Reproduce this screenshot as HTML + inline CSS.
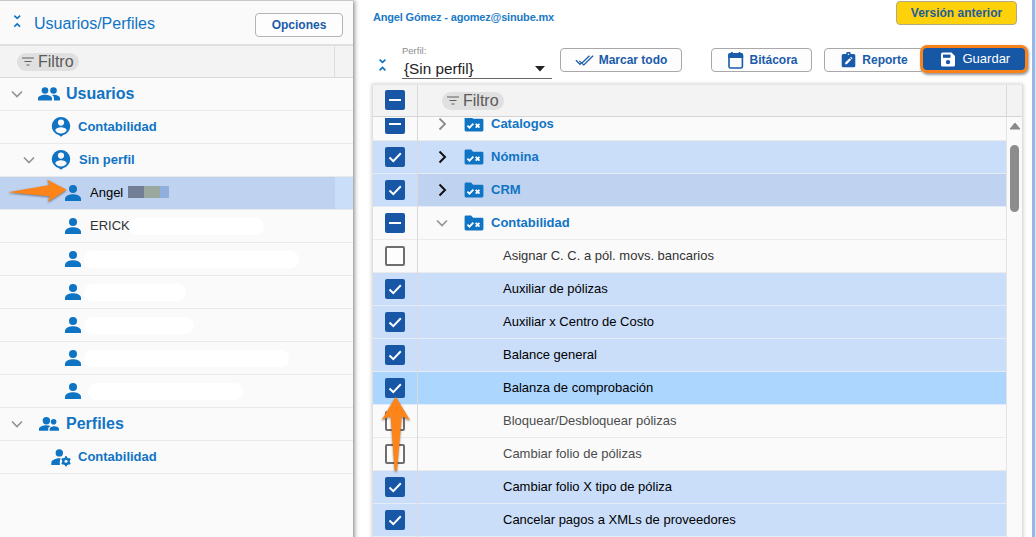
<!DOCTYPE html><html lang="es"><head>
<meta charset="utf-8">
<title>Usuarios/Perfiles</title>
<style>
*{box-sizing:border-box;margin:0;padding:0}
html,body{width:1036px;height:537px;overflow:hidden;background:#fff;font-family:"Liberation Sans",Arial,sans-serif;}
body{position:relative}
.abs{position:absolute}
#left{position:absolute;left:0;top:0;width:353px;height:545px;background:#fafafa;box-shadow:1px 0 5px rgba(0,0,0,.55);z-index:2}
#left .hdr{position:absolute;left:0;top:0;width:353px;height:46px;border-top:1px solid #c8c8c8;border-bottom:2px solid #e0e0e0}
#left .title{position:absolute;left:34px;top:14px;font-size:16px;color:#1074c4;line-height:18px;white-space:nowrap}
.btn{position:absolute;border:1px solid #a8a8a8;border-radius:4px;background:#fdfdfd;color:#1a5baa;font-weight:bold;font-size:12px;line-height:22px;text-align:center;white-space:nowrap}
.frow{position:absolute;left:0;top:46px;width:353px;height:32px;background:#f3f3f3;border-bottom:1px solid #dadada}
.chip{position:absolute;height:18px;width:62px;border-radius:9px;background:#e0e0e0;color:#5a5a5a;font-size:16px;line-height:18px;padding-left:21px;white-space:nowrap}
.chip svg{position:absolute;left:5px;top:4px}
.lrow{position:absolute;left:0;width:353px;height:33px;border-bottom:1px solid #e9e9e9}
.lrow.sel{background:#bfd3f1}
.lrow .t{position:absolute;top:8px;line-height:16px;white-space:nowrap}
.t.h1{font-size:16px;font-weight:bold;color:#1074c4}
.t.h2{font-size:13px;font-weight:bold;color:#1074c4}
.t.u{font-size:13px;color:#333}
.sel .t.u{color:#000}
.lrow svg{position:absolute}
.pill{position:absolute;background:#fff;border-radius:9px;height:17px}
#right{position:absolute;left:354px;top:0;width:682px;height:537px;background:#fff}
.grid{position:absolute;left:372px;top:84px;width:651px;border-right:1px solid #dedede;height:460px;background:#fafafa;border-left:1px solid #e0e0e0;border-top:1px solid #e6e6e6;box-shadow:0 0 4px rgba(0,0,0,.22)}
.ghead{position:absolute;left:0;top:0;width:649px;height:32px;background:#f3f3f3;border-bottom:1px solid #d4d4d4}
.grow{position:absolute;left:0;width:634px;height:33px;border-bottom:1px solid #ebebeb}
.grow.c1{background:#cadefa;border-bottom-color:#e4ecf8}
.grow.c2{background:#bfd3f1;border-bottom-color:#e4ecf8}
.grow.c3{background:#add6ff;border-bottom-color:#e4ecf8}
.grow .cb{position:absolute;left:12px;top:6px}
.grow .t{position:absolute;top:8px;font-size:13px;line-height:15px;white-space:nowrap;color:#222}
.grow .t.b,.grow.c1 .t.b,.grow.c2 .t.b{font-weight:bold;color:#1074c4;top:7.500px}
.grow .t.g{color:#4c4c4c}
.grow.c1 .t,.grow.c3 .t{color:#000}
.grow .t{color:#333}
.vsep{position:absolute;left:44px;top:0;width:1px;height:460px;background:#d9d9d9}
.cb{width:20px;height:20px;border-radius:2px;background:#1757a6}
.cb.e{background:#fdfdfd;border:2px solid #6e6e6e}
.cb svg{position:absolute;left:0;top:0}
</style>
</head>
<body>
<div id="right"></div>

<!-- right header -->
<div class="abs" style="left:373px;top:11px;font-size:11px;font-weight:bold;line-height:13px;color:#1a7ac6;white-space:nowrap;letter-spacing:-0.17px">Angel Gómez - agomez@sinube.mx</div>
<div class="btn" style="left:896px;top:1px;width:121px;height:24px;background:#fed20a;border-color:#b3aa80;color:#1d5c9c;line-height:22px">Versión anterior</div>

<!-- toolbar -->
<svg class="abs" style="left:377px;top:58px" width="12" height="15" viewBox="0 0 12 15"><path d="M2.600 1.600 L5.500 4.300 L8.400 1.600 M2.600 12.400 L5.500 9.500 L8.400 12.400" fill="none" stroke="#1074c4" stroke-width="1.700"></path></svg>
<div class="abs" style="left:402px;top:46px;font-size:9.500px;line-height:10px;color:#8c8c8c">Perfil:</div>
<div class="abs" style="left:404px;top:60px;font-size:15.300px;line-height:17px;color:#222;white-space:nowrap">{Sin perfil}</div>
<div class="abs" style="left:402px;top:77.500px;width:150px;height:1px;background:#666"></div>
<svg class="abs" style="left:535px;top:66px" width="10" height="6" viewBox="0 0 10 6"><path d="M0 0 H10 L5 5.500 Z" fill="#222"></path></svg>

<div class="btn" style="left:560px;top:48px;width:122px;height:24px;padding-left:24px">Marcar todo
<svg class="abs" style="left:14px;top:6px" width="20" height="12" viewBox="0 0 20 12"><path d="M0.900 5.200 L5 9.300 L6.200 8.100 M4.300 5.900 L8.800 9.900 L18.100 0.700 M7 8 L14.500 0.700" fill="none" stroke="#1a5baa" stroke-width="1.250"></path></svg></div>
<div class="btn" style="left:711px;top:48px;width:101px;height:24px;padding-left:24px">Bitácora
<svg class="abs" style="left:15px;top:2px" width="17" height="18" viewBox="0 0 17 18"><rect x="2" y="2.800" width="13.400" height="14.200" rx="1.600" fill="none" stroke="#1a5baa" stroke-width="1.600"></rect><path d="M1.200 7 V4 A2 2 0 0 1 3.200 2 H14.200 A2 2 0 0 1 16.200 4 V7 Z" fill="#1a5baa"></path><rect x="4" y="1" width="1.800" height="2" fill="#1a5baa"></rect><rect x="11.600" y="1" width="1.800" height="2" fill="#1a5baa"></rect></svg></div>
<div class="btn" style="left:824px;top:48px;width:100px;height:24px;padding-left:22px">Reporte
<svg class="abs" style="left:16px;top:3px" width="15" height="16" viewBox="0 0 15 16"><path d="M2.200 2 H5.200 A2.300 2.300 0 0 1 9.800 2 H12.800 A1.500 1.500 0 0 1 14.300 3.500 V13.700 A1.500 1.500 0 0 1 12.800 15.200 H2.200 A1.500 1.500 0 0 1 0.700 13.700 V3.500 A1.500 1.500 0 0 1 2.200 2 Z" fill="#1a5baa"></path><circle cx="7.500" cy="2.200" r="0.800" fill="#fff"></circle><path d="M4.200 12.200 V10.600 L8.600 6.200 L10.200 7.800 L5.800 12.200 Z M9.200 5.600 L10 4.800 L11.600 6.400 L10.800 7.200 Z" fill="#fff"></path></svg></div>
<div class="abs" style="left:919.500px;top:45px;width:108px;height:27.500px;border:3px solid #fb8219;border-radius:7px;background:#1658a6;box-shadow:1px 1.500px 2.500px rgba(0,0,0,.4)"></div>
<div class="abs" style="left:962.500px;top:51px;font-size:13px;line-height:15px;color:#fff;white-space:nowrap">Guardar</div>
<svg class="abs" style="left:940px;top:52px" width="16" height="16" viewBox="0 0.400 16 16"><path d="M1 2.500 A1.500 1.500 0 0 1 2.500 1 H11.500 L15 4.500 V13.500 A1.500 1.500 0 0 1 13.500 15 H2.500 A1.500 1.500 0 0 1 1 13.500 Z" fill="#fff"></path><rect x="3" y="3" width="7.500" height="3.200" fill="#1658a6"></rect><circle cx="8" cy="10.500" r="2.200" fill="#1658a6"></circle></svg>

<!-- grid -->
<div class="grid">
  <div class="ghead">
    <div class="cb abs" style="left:12px;top:5px"><svg width="20" height="20"><rect x="4" y="9" width="12" height="2" fill="#fff"></rect></svg></div>
    <div class="chip" style="left:69px;top:7px">Filtro<svg width="14" height="10" viewBox="0 0 14 10"><path d="M0 1 H12 M2.500 4.500 H9.500 M4.500 8 H7.500" stroke="#606060" stroke-width="1.150"></path></svg></div>
    <div class="abs" style="left:633px;top:0;width:1px;height:32px;background:#d9d9d9"></div>
  </div>
  <div id="rows" style="position:absolute;left:0;top:33px;width:649px;height:430px;overflow:hidden"><div class="grow " style="top:-10px"><div class="cb"><svg width="20" height="20"><rect x="4" y="9" width="12" height="2" fill="#fff"></rect></svg></div><svg class="abs" style="left:65px;top:9px" width="9" height="14" viewBox="0 0 9 14"><path d="M1.500 1.500 L7 7 L1.500 12.500" fill="none" stroke="#8a8a8a" stroke-width="1.800"></path></svg><svg class="abs" style="left:91px;top:8px" width="20" height="16" viewBox="0 0 21 17"><path d="M0.500 2 A1.500 1.500 0 0 1 2 0.500 H7.500 L9.500 2.800 H19 A1.500 1.500 0 0 1 20.500 4.300 V15 A1.500 1.500 0 0 1 19 16.500 H2 A1.500 1.500 0 0 1 0.500 15 Z" fill="#1074c4"></path><path d="M3.500 10.300 L5.700 12.400 L9.800 8.200" fill="none" stroke="#fff" stroke-width="1.900"></path><path d="M12.300 8.400 L16.300 12.400 M16.300 8.400 L12.300 12.400" stroke="#fff" stroke-width="1.900"></path></svg><div class="t b" style="left:118px">Catalogos</div></div><div class="grow c1" style="top:23px"><div class="cb"><svg width="20" height="20"><path d="M4.500 10.500 L8.300 14.200 L15.800 6.300" fill="none" stroke="#fff" stroke-width="2"></path></svg></div><svg class="abs" style="left:65px;top:9px" width="9" height="14" viewBox="0 0 9 14"><path d="M1.500 1.500 L7 7 L1.500 12.500" fill="none" stroke="#111" stroke-width="2"></path></svg><svg class="abs" style="left:91px;top:8px" width="20" height="16" viewBox="0 0 21 17"><path d="M0.500 2 A1.500 1.500 0 0 1 2 0.500 H7.500 L9.500 2.800 H19 A1.500 1.500 0 0 1 20.500 4.300 V15 A1.500 1.500 0 0 1 19 16.500 H2 A1.500 1.500 0 0 1 0.500 15 Z" fill="#1074c4"></path><path d="M3.500 10.300 L5.700 12.400 L9.800 8.200" fill="none" stroke="#fff" stroke-width="1.900"></path><path d="M12.300 8.400 L16.300 12.400 M16.300 8.400 L12.300 12.400" stroke="#fff" stroke-width="1.900"></path></svg><div class="t b" style="left:118px">Nómina</div></div><div class="grow c2" style="top:56px"><div class="abs" style="left:0;top:0;width:44px;height:32px;background:#cadefa"></div><div class="cb"><svg width="20" height="20"><path d="M4.500 10.500 L8.300 14.200 L15.800 6.300" fill="none" stroke="#fff" stroke-width="2"></path></svg></div><svg class="abs" style="left:65px;top:9px" width="9" height="14" viewBox="0 0 9 14"><path d="M1.500 1.500 L7 7 L1.500 12.500" fill="none" stroke="#111" stroke-width="2"></path></svg><svg class="abs" style="left:91px;top:8px" width="20" height="16" viewBox="0 0 21 17"><path d="M0.500 2 A1.500 1.500 0 0 1 2 0.500 H7.500 L9.500 2.800 H19 A1.500 1.500 0 0 1 20.500 4.300 V15 A1.500 1.500 0 0 1 19 16.500 H2 A1.500 1.500 0 0 1 0.500 15 Z" fill="#1074c4"></path><path d="M3.500 10.300 L5.700 12.400 L9.800 8.200" fill="none" stroke="#fff" stroke-width="1.900"></path><path d="M12.300 8.400 L16.300 12.400 M16.300 8.400 L12.300 12.400" stroke="#fff" stroke-width="1.900"></path></svg><div class="t b" style="left:118px">CRM</div></div><div class="grow " style="top:89px"><div class="cb"><svg width="20" height="20"><rect x="4" y="9" width="12" height="2" fill="#fff"></rect></svg></div><svg class="abs" style="left:63px;top:12px" width="12" height="9" viewBox="0 0 12 9"><path d="M1 1.500 L6 6.500 L11 1.500" fill="none" stroke="#949494" stroke-width="1.700"></path></svg><svg class="abs" style="left:91px;top:8px" width="20" height="16" viewBox="0 0 21 17"><path d="M0.500 2 A1.500 1.500 0 0 1 2 0.500 H7.500 L9.500 2.800 H19 A1.500 1.500 0 0 1 20.500 4.300 V15 A1.500 1.500 0 0 1 19 16.500 H2 A1.500 1.500 0 0 1 0.500 15 Z" fill="#1074c4"></path><path d="M3.500 10.300 L5.700 12.400 L9.800 8.200" fill="none" stroke="#fff" stroke-width="1.900"></path><path d="M12.300 8.400 L16.300 12.400 M16.300 8.400 L12.300 12.400" stroke="#fff" stroke-width="1.900"></path></svg><div class="t b" style="left:118px">Contabilidad</div></div><div class="grow " style="top:122px"><div class="cb e"></div><div class="t" style="left:130px">Asignar C. C. a pól. movs. bancarios</div></div><div class="grow c1" style="top:155px"><div class="cb"><svg width="20" height="20"><path d="M4.500 10.500 L8.300 14.200 L15.800 6.300" fill="none" stroke="#fff" stroke-width="2"></path></svg></div><div class="t" style="left:130px">Auxiliar de pólizas</div></div><div class="grow c1" style="top:188px"><div class="cb"><svg width="20" height="20"><path d="M4.500 10.500 L8.300 14.200 L15.800 6.300" fill="none" stroke="#fff" stroke-width="2"></path></svg></div><div class="t" style="left:130px">Auxiliar x Centro de Costo</div></div><div class="grow c1" style="top:221px"><div class="cb"><svg width="20" height="20"><path d="M4.500 10.500 L8.300 14.200 L15.800 6.300" fill="none" stroke="#fff" stroke-width="2"></path></svg></div><div class="t" style="left:130px">Balance general</div></div><div class="grow c3" style="top:254px"><div class="cb"><svg width="20" height="20"><path d="M4.500 10.500 L8.300 14.200 L15.800 6.300" fill="none" stroke="#fff" stroke-width="2"></path></svg></div><div class="t" style="left:130px">Balanza de comprobación</div></div><div class="grow " style="top:287px"><div class="cb e"></div><div class="t g" style="left:130px">Bloquear/Desbloquear pólizas</div></div><div class="grow " style="top:320px"><div class="cb e"></div><div class="t g" style="left:130px">Cambiar folio de pólizas</div></div><div class="grow c1" style="top:353px"><div class="cb"><svg width="20" height="20"><path d="M4.500 10.500 L8.300 14.200 L15.800 6.300" fill="none" stroke="#fff" stroke-width="2"></path></svg></div><div class="t" style="left:130px">Cambiar folio X tipo de póliza</div></div><div class="grow c1" style="top:386px"><div class="cb"><svg width="20" height="20"><path d="M4.500 10.500 L8.300 14.200 L15.800 6.300" fill="none" stroke="#fff" stroke-width="2"></path></svg></div><div class="t" style="left:130px">Cancelar pagos a XMLs de proveedores</div></div></div>
  <div class="vsep"></div>
  <div class="abs" style="left:633px;top:32px;width:1px;height:430px;background:#e4e4e4"></div>
  <!-- scrollbar -->
  <svg class="abs" style="left:636px;top:36px" width="12" height="10" viewBox="0 0 12 10"><path d="M1 8 L6 2 L11 8 Z" fill="#8a8a8a" stroke="#8a8a8a" stroke-width="1" stroke-linejoin="round"></path></svg>
  <div class="abs" style="left:637px;top:60px;width:9px;height:67px;border-radius:4.500px;background:#8c8c8c"></div>
</div>

<!-- right blue strip -->
<div class="abs" style="left:1032px;top:0;width:4px;height:537px;background:#97b8e6;border-right:1px solid #dbe6f6"></div>

<!-- LEFT PANEL -->
<div id="left">
  <div class="hdr">
    <svg class="abs" style="left:12px;top:13px" width="12" height="15" viewBox="0 0 12 15"><path d="M2.300 1.700 L5.200 4.400 L8.100 1.700 M2.300 12.600 L5.200 9.900 L8.100 12.600" fill="none" stroke="#1074c4" stroke-width="1.600"></path></svg>
    <div class="title">Usuarios/Perfiles</div>
    <div class="btn" style="left:255px;top:12px;width:88px;height:24px;border-radius:4px;border-color:#b4b4b4">Opciones</div>
  </div>
  <div class="frow">
    <div class="chip" style="left:17px;top:7px">Filtro<svg width="14" height="10" viewBox="0 0 14 10"><path d="M0 1 H12 M2.500 4.500 H9.500 M4.500 8 H7.500" stroke="#606060" stroke-width="1.150"></path></svg></div>
    <div class="abs" style="left:334px;top:0;width:1px;height:31px;background:#dcdcdc"></div>
  </div>
  <div id="lrows"><div class="lrow" style="top:78px"><svg style="left:11px;top:12px" width="12" height="9" viewBox="0 0 12 9"><path d="M1 1.500 L6 6.500 L11 1.500" fill="none" stroke="#949494" stroke-width="1.700"></path></svg><svg style="left:37px;top:8px" width="24" height="16" viewBox="0 0 24 16"><circle cx="8" cy="4.500" r="3.300" fill="#1074c4"></circle><circle cx="16.500" cy="4.500" r="3.300" fill="#1074c4"></circle><path d="M1 14.500 V12.500 C1 10 5 8.800 8 8.800 C11 8.800 15 10 15 12.500 V14.500 Z" fill="#1074c4"></path><path d="M16.500 8.800 C19.500 8.800 23 10 23 12.500 V14.500 H17 V12.500 C17 11 16.300 9.800 15.200 8.900 Z" fill="#1074c4"></path></svg><div class="t h1" style="left:66px">Usuarios</div></div><div class="lrow" style="top:111px"><svg style="left:51px;top:6px" width="20" height="22" viewBox="0 0 20 22"><path d="M10 0 A9.200 9.200 0 0 1 12.300 18.100 L10 19.800 L7.700 18.100 A9.200 9.200 0 0 1 10 0 Z" fill="#1074c4"></path><circle cx="10" cy="5.600" r="3.100" fill="#fafafa"></circle><path d="M4.300 13.500 C4.300 11.300 8 10.300 10 10.300 C12 10.300 15.700 11.300 15.700 13.500 A6.800 6.800 0 0 1 4.300 13.500 Z" fill="#fafafa"></path></svg><div class="t h2" style="left:78px">Contabilidad</div></div><div class="lrow" style="top:144px"><svg style="left:23px;top:12px" width="12" height="9" viewBox="0 0 12 9"><path d="M1 1.500 L6 6.500 L11 1.500" fill="none" stroke="#949494" stroke-width="1.700"></path></svg><svg style="left:51px;top:6px" width="20" height="22" viewBox="0 0 20 22"><path d="M10 0 A9.200 9.200 0 0 1 12.300 18.100 L10 19.800 L7.700 18.100 A9.200 9.200 0 0 1 10 0 Z" fill="#1074c4"></path><circle cx="10" cy="5.600" r="3.100" fill="#fafafa"></circle><path d="M4.300 13.500 C4.300 11.300 8 10.300 10 10.300 C12 10.300 15.700 11.300 15.700 13.500 A6.800 6.800 0 0 1 4.300 13.500 Z" fill="#fafafa"></path></svg><div class="t h2" style="left:79px">Sin perfil</div></div><div class="lrow sel" style="top:177px"><svg style="left:65px;top:8px" width="16" height="16" viewBox="0 0 16 16"><circle cx="8" cy="4" r="4" fill="#1074c4"></circle><path d="M0 16 V13.700 C0 10.600 5 9.200 8 9.200 C11 9.200 16 10.600 16 13.700 V16 Z" fill="#1074c4"></path></svg><div class="t u" style="left:90px">Angel</div><div class="abs" style="left:128px;top:9px;width:16px;height:12px;background:#727d96"></div><div class="abs" style="left:144px;top:9px;width:16px;height:12px;background:#9ba89f"></div><div class="abs" style="left:160px;top:9px;width:9px;height:12px;background:#8fb0dc"></div><div class="abs" style="left:335px;top:0;width:18px;height:32px;background:#cadefa"></div></div><div class="lrow" style="top:210px"><svg style="left:65px;top:8px" width="16" height="16" viewBox="0 0 16 16"><circle cx="8" cy="4" r="4" fill="#1074c4"></circle><path d="M0 16 V13.700 C0 10.600 5 9.200 8 9.200 C11 9.200 16 10.600 16 13.700 V16 Z" fill="#1074c4"></path></svg><div class="pill" style="left:128px;top:8px;width:136px"></div><div class="t u" style="left:90px">ERICK</div></div><div class="lrow" style="top:243px"><svg style="left:65px;top:8px" width="16" height="16" viewBox="0 0 16 16"><circle cx="8" cy="4" r="4" fill="#1074c4"></circle><path d="M0 16 V13.700 C0 10.600 5 9.200 8 9.200 C11 9.200 16 10.600 16 13.700 V16 Z" fill="#1074c4"></path></svg><div class="pill" style="left:84px;top:8px;width:215px"></div></div><div class="lrow" style="top:276px"><svg style="left:65px;top:8px" width="16" height="16" viewBox="0 0 16 16"><circle cx="8" cy="4" r="4" fill="#1074c4"></circle><path d="M0 16 V13.700 C0 10.600 5 9.200 8 9.200 C11 9.200 16 10.600 16 13.700 V16 Z" fill="#1074c4"></path></svg><div class="pill" style="left:84px;top:8px;width:102px"></div></div><div class="lrow" style="top:309px"><svg style="left:65px;top:8px" width="16" height="16" viewBox="0 0 16 16"><circle cx="8" cy="4" r="4" fill="#1074c4"></circle><path d="M0 16 V13.700 C0 10.600 5 9.200 8 9.200 C11 9.200 16 10.600 16 13.700 V16 Z" fill="#1074c4"></path></svg><div class="pill" style="left:84px;top:8px;width:110px"></div></div><div class="lrow" style="top:342px"><svg style="left:65px;top:8px" width="16" height="16" viewBox="0 0 16 16"><circle cx="8" cy="4" r="4" fill="#1074c4"></circle><path d="M0 16 V13.700 C0 10.600 5 9.200 8 9.200 C11 9.200 16 10.600 16 13.700 V16 Z" fill="#1074c4"></path></svg><div class="pill" style="left:84px;top:8px;width:205px"></div></div><div class="lrow" style="top:375px"><svg style="left:65px;top:8px" width="16" height="16" viewBox="0 0 16 16"><circle cx="8" cy="4" r="4" fill="#1074c4"></circle><path d="M0 16 V13.700 C0 10.600 5 9.200 8 9.200 C11 9.200 16 10.600 16 13.700 V16 Z" fill="#1074c4"></path></svg><div class="pill" style="left:88px;top:8px;width:155px"></div></div><div class="lrow" style="top:408px"><svg style="left:11px;top:12px" width="12" height="9" viewBox="0 0 12 9"><path d="M1 1.500 L6 6.500 L11 1.500" fill="none" stroke="#949494" stroke-width="1.700"></path></svg><svg style="left:38px;top:9px" width="22" height="15" viewBox="0 0 22 15"><circle cx="8.400" cy="3.700" r="3.700" fill="#1074c4"></circle><circle cx="15.600" cy="4.800" r="2.800" fill="#1074c4"></circle><path d="M1 13.800 V12 C1 9.300 5.500 8.200 8.400 8.200 C9.800 8.200 11.300 8.500 12.500 9 C11 9.800 10.200 10.800 10.200 12 V13.800 Z" fill="#1074c4"></path><path d="M11.600 13.800 V12.200 C11.600 10 14 9.300 15.900 9.300 C17.800 9.300 21 10.100 21 12.200 V13.800 Z" fill="#1074c4"></path></svg><div class="t h1" style="left:66px">Perfiles</div></div><div class="lrow" style="top:441px"><svg style="left:51px;top:8px" width="22" height="18" viewBox="0 0 22 18"><circle cx="8.300" cy="3.900" r="3.700" fill="#1074c4"></circle><path d="M0.300 16 V13.500 C0.300 11 5.300 9.200 8.300 9.200 C8.800 9.200 9.300 9.250 9.800 9.300 C9 10.500 8.600 12 8.900 16 Z" fill="#1074c4"></path><circle cx="15" cy="12.300" r="2.800" fill="none" stroke="#1074c4" stroke-width="2.200"></circle><path d="M15 7.300 V17.300 M10.700 9.800 L19.300 14.800 M19.300 9.800 L10.700 14.800" stroke="#1074c4" stroke-width="2"></path><circle cx="15" cy="12.300" r="1.500" fill="#fafafa"></circle></svg><div class="t h2" style="left:78px">Contabilidad</div></div></div>
</div>

<!-- arrows -->
<svg class="abs" style="left:0;top:170px;z-index:5;overflow:visible" width="80" height="45" viewBox="0 170 80 45"><path d="M7.900 192.200 L49.700 185 L47 179.400 L66.600 189.800 L47.800 201.900 L49.700 196.300 Z" fill="#fd8418" style="filter:drop-shadow(0.500px 1px 1px rgba(0,0,0,.45))"></path></svg>
<svg class="abs" style="left:372px;top:390px;z-index:5;overflow:visible" width="50" height="90" viewBox="372 390 50 90"><path d="M395.800 396.800 L410.200 420.600 L401.800 416.300 L397 470 Q395.800 472.500 394.600 470 L390.600 416.300 L381.700 420 Z" fill="#fd8418" style="filter:drop-shadow(0.500px 1px 1px rgba(0,0,0,.45))"></path></svg>



</body></html>
